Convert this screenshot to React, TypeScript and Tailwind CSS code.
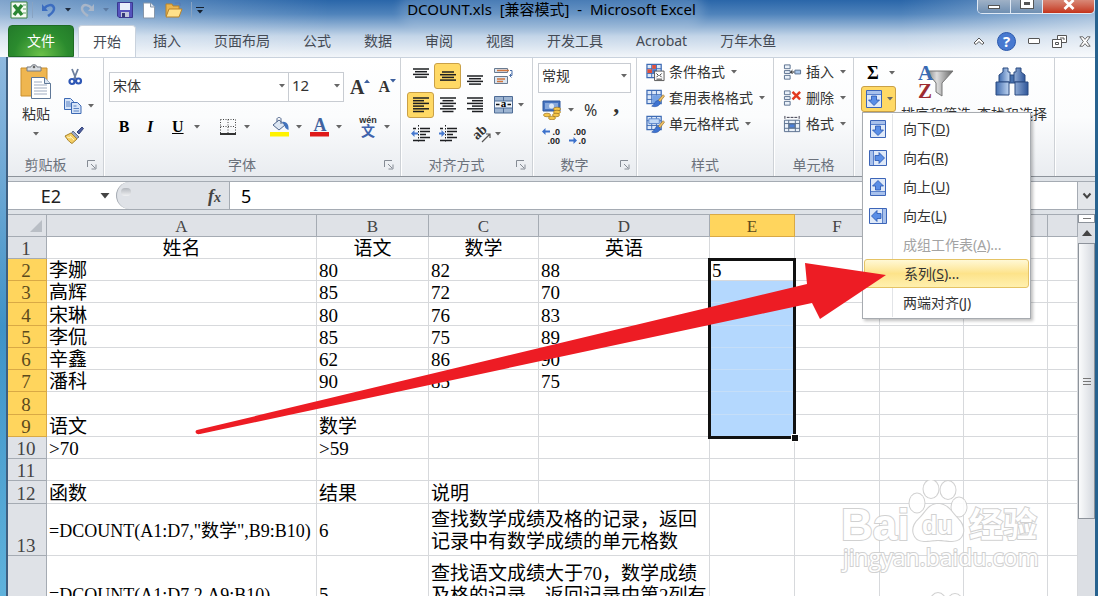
import type { ReactNode } from "react";

const tabs = ["插入", "页面布局", "公式", "数据", "审阅", "视图", "开发工具", "Acrobat", "万年木鱼"];
const columns = ["A", "B", "C", "D", "E", "F", "G", "H", ""];

type Row = { n: number; tall?: boolean; cells: string[]; center?: boolean };

const rows: Row[] = [
  { n: 1, cells: ["姓名", "语文", "数学", "英语"], center: true },
  { n: 2, cells: ["李娜", "80", "82", "88", "5"] },
  { n: 3, cells: ["高辉", "85", "72", "70"] },
  { n: 4, cells: ["宋琳", "80", "76", "83"], tall: true },
  { n: 5, cells: ["李侃", "85", "75", "89"] },
  { n: 6, cells: ["辛鑫", "62", "86", "90"] },
  { n: 7, cells: ["潘科", "90", "85", "75"] },
  { n: 8, cells: [], tall: true },
  { n: 9, cells: ["语文", "数学"] },
  { n: 10, cells: [">70", ">59"] },
  { n: 11, cells: [] },
  { n: 12, cells: ["函数", "结果", "说明"], tall: true },
];

const menuItems = [
  { text: "向下", hotkey: "D", dir: "down" },
  { text: "向右", hotkey: "R", dir: "right" },
  { text: "向上", hotkey: "U", dir: "up" },
  { text: "向左", hotkey: "L", dir: "left" },
  { text: "成组工作表", hotkey: "A", dots: true, disabled: true },
  { text: "系列", hotkey: "S", dots: true, active: true },
  { text: "两端对齐", hotkey: "J" },
];

function Caret({ className = "text-[#666]" }: { className?: string }) {
  return (
    <svg viewBox="0 0 6 4" className={`h-1 w-1.5 shrink-0 ${className}`} fill="currentColor">
      <path d="M0 0h6L3 3.6z" />
    </svg>
  );
}

function Divider() {
  return <span className="h-6 w-px shrink-0 bg-[#d5d8dc]" />;
}

function Group({ label, width, launcher, children }: { label: string; width: string; launcher?: boolean; children: ReactNode }) {
  return (
    <section className={`flex shrink-0 flex-col border-r border-[#cdd1d6] shadow-[1px_0_0_#fff] ${width}`}>
      <div className="h-[95px] pt-1">{children}</div>
      <div className="flex h-[23px] items-center px-1 text-[#6b717b]">
        <span className="flex-1 text-center">{label}</span>
        {launcher && (
          <button aria-label={`${label}设置`} className="mr-0.5 ml-2">
            <svg viewBox="0 0 10 10" className="h-2.5 w-2.5" fill="none" stroke="#858b94">
              <path d="M.5 7V.5H8M4 4l4 4M9 4.5V9H4.5" />
            </svg>
          </button>
        )}
      </div>
    </section>
  );
}

function Lines({ widths, align, y = 2 }: { widths: number[]; align: "start" | "center" | "end"; y?: number }) {
  return (
    <svg viewBox="0 0 18 18" className="h-[18px] w-[18px]" stroke="#1d1f22" strokeWidth="1.500">
      {widths.map((w, i) => {
        const x = align === "start" ? 1 : align === "center" ? 9 - w / 2 : 17 - w;
        return <path key={i} d={`M${x} ${y + i * 2.7}h${w}`} />;
      })}
    </svg>
  );
}

function AlignButton({ label, on, children }: { label: string; on?: boolean; children: ReactNode }) {
  return (
    <button
      aria-label={label}
      className={`flex h-[26px] w-[27px] items-center justify-center rounded-[3px] ${on ? "border border-[#c9a047] bg-[#ffd965]" : ""}`}
    >
      {children}
    </button>
  );
}

const turns: Record<string, string> = { down: "rotate(0 9 9)", left: "rotate(90 9 9)", up: "rotate(180 9 9)", right: "rotate(270 9 9)" };

function FillIcon({ dir }: { dir: string }) {
  return (
    <svg viewBox="0 0 18 18" className="h-[18px] w-[18px]">
      <g transform={turns[dir]}>
        <path d="M1.500.500h15v17h-15z" fill="#dfe9f8" stroke="#3c65b8" />
        <path d="M2 1h14v3H2z" fill="#a8c1ec" />
        <path d="M2 4.500h14" stroke="#5b82cc" />
        <path d="M6.500 6h5v4h3L9 15.500 3.500 10h3z" fill="#5a8ee6" stroke="#2554b0" strokeWidth=".8" />
      </g>
    </svg>
  );
}

function PasteIcon() {
  return (
    <svg viewBox="0 0 32 36" className="h-9 w-8">
      <path d="M1 4h26v28H1z" fill="#efb650" stroke="#c98f2e" />
      <path d="M7 7V3h4c0-3 6-3 6 0h4v4z" fill="#d9dde2" stroke="#747a83" />
      <circle cx="14" cy="3" r="1.300" fill="#666" />
      <path d="M11.500 13.500h13l6 6v15h-19z" fill="#fff" stroke="#5f7898" />
      <path d="M24.500 13.500v6h6" fill="#dce5f0" stroke="#5f7898" />
      <path d="M14 18h8M14 21h13M14 24h13M14 27h13M14 30h13" stroke="#9fabc0" />
    </svg>
  );
}

function CutIcon() {
  return (
    <svg viewBox="0 0 18 18" className="h-[18px] w-[18px]" fill="none">
      <path d="M6 1l4 10M12 1L8 11" stroke="#6d7f9d" strokeWidth="1.800" />
      <circle cx="6" cy="13.500" r="2.500" stroke="#2e57b5" strokeWidth="2.200" />
      <circle cx="12.500" cy="13" r="2.500" stroke="#2e57b5" strokeWidth="2.200" />
    </svg>
  );
}

function CopyIcon() {
  return (
    <svg viewBox="0 0 18 18" className="h-[18px] w-[18px]" fill="#d6e4f8" stroke="#3c69b4">
      <path d="M.5 1.500h6l3 3v8h-9z" />
      <path d="M7.500 5.500h6l3.500 3.500v7.500H7.500z" />
      <path d="M2 5h4M2 7h5M2 9h5M9.500 9h3M9.500 11.500h5.500M9.500 14h5.500" strokeWidth=".8" />
    </svg>
  );
}

function BrushIcon() {
  return (
    <svg viewBox="0 0 20 18" className="h-[18px] w-5">
      <path d="M13 6l5-5 1.500 1.500L15 8z" fill="#4c5e9e" stroke="#37467c" />
      <path d="M9 5l6 6-3 2-5-5z" fill="#9da9c4" stroke="#5d6a8c" />
      <path d="M7 7l6 6-5 4.500C5 16 3 13 1 10z" fill="#f5cf66" stroke="#a8832c" />
      <path d="M3 11l4 1M6 10l4 4" stroke="#fff3bf" />
    </svg>
  );
}

function BorderIcon() {
  return (
    <svg viewBox="0 0 16 16" className="h-4 w-4" stroke="#444" fill="none">
      <path d="M.5.500h15M.5 7.500h15M.5.500v14M8 .500v14M15.500.500v14" strokeDasharray="1 1.500" />
      <path d="M0 15h16" stroke="#000" strokeWidth="1.600" />
    </svg>
  );
}

function BucketIcon() {
  return (
    <svg viewBox="0 0 20 20" className="h-5 w-5">
      <path d="M3 8l6-5 6 5-6 5z" fill="#dce6f3" stroke="#51678d" />
      <path d="M7 5V2c0-2 4-2 4 0v5" fill="none" stroke="#51678d" />
      <path d="M12 5c5-1 7 3 6.500 8-2-1-4-2-4-5z" fill="#4273bd" />
      <path d="M0 15h19v4.500H0z" fill="#fff200" />
    </svg>
  );
}

function FontColorIcon() {
  return (
    <svg viewBox="0 0 20 20" className="h-5 w-5 overflow-visible">
      <text x="10" y="14" textAnchor="middle" fontSize="18" fontWeight="700" fontFamily="Liberation Serif, serif" fill="#41639f">A</text>
      <path d="M0 15h19v4.500H0z" fill="#df1a1a" />
    </svg>
  );
}

function PhoneticIcon() {
  return (
    <svg viewBox="0 0 20 20" className="h-5 w-5 overflow-visible">
      <text x="10" y="6" textAnchor="middle" fontSize="9" fontWeight="700" fontFamily="Liberation Sans, sans-serif" fill="#333">wén</text>
      <text x="10" y="19" textAnchor="middle" fontSize="14" fontWeight="700" fontFamily="Noto Sans CJK SC, sans-serif" fill="#3f63ac">文</text>
    </svg>
  );
}

function IndentIcon({ right }: { right?: boolean }) {
  return (
    <svg viewBox="0 0 20 18" className="h-[18px] w-5" stroke="#1d1f22" strokeWidth="1.700">
      <path d="M9 3.500h10M9 6.500h10M9 9.500h6M9 12.500h10M2 15.500h12M2 3.500h3" />
      <path d="M7.500 0v18" strokeDasharray="1.500 1.500" strokeWidth="1" />
      <path d={right ? "M7 8.500L3.500 5v2.500H1v2h2.500V12z" : "M0 8.500L3.500 5v2.500H7v2H3.500V12z"} fill="#4679cf" stroke="none" />
    </svg>
  );
}

function WrapIcon() {
  return (
    <svg viewBox="0 0 20 18" className="h-[18px] w-5" fill="#dbe5f0" stroke="#697b91">
      <path d="M.5 1.500h13v4H.5zM.5 9.500h13v7H.5z" />
      <path d="M3 3.500h12M3 12h8M3 14.500h6" stroke="#d0763e" strokeWidth="1.300" />
      <path d="M16 3.500h2v5h-2m1.500-2l-2 2 2 2" fill="none" stroke="#4b6fa8" />
    </svg>
  );
}

function MergeIcon() {
  return (
    <svg viewBox="0 0 20 18" className="h-[18px] w-5">
      <path d="M.5.500h18v16.500H.5z" fill="#9eb5d2" stroke="#4f6c96" />
      <path d="M1 5h17v7H1z" fill="#f2f6fb" />
      <path d="M9.500 1v4M9.500 12v5M.5 5h18M.5 12h18" stroke="#4f6c96" />
      <text x="9.500" y="11" textAnchor="middle" fontSize="11" fontWeight="700" fontFamily="Liberation Serif, serif">a</text>
      <path d="M2 8.500h3.500M13.500 8.500H17" stroke="#111" strokeWidth="1.500" />
    </svg>
  );
}

function OrientationIcon() {
  return (
    <svg viewBox="0 0 20 18" className="h-[18px] w-5 overflow-visible">
      <text x="1" y="12" fontSize="14" fontWeight="700" fontFamily="Liberation Serif, serif" transform="rotate(-42 7 10)" fill="#333">ab</text>
      <path d="M9 17l8-8m0 4V9h-4" fill="none" stroke="#555" strokeWidth="1.200" />
    </svg>
  );
}

function CurrencyIcon() {
  return (
    <svg viewBox="0 0 20 20" className="h-5 w-5">
      <path d="M1 1h17v10H1z" fill="#4774c0" stroke="#2e569c" />
      <path d="M3 3h13v6H3z" fill="#87a8dc" />
      <circle cx="9.500" cy="6" r="2.500" fill="#dce8f8" />
      <g fill="#f6c64a" stroke="#9c7420" strokeWidth=".7">
        <ellipse cx="15" cy="9" rx="3.500" ry="1.800" />
        <ellipse cx="15" cy="12" rx="3.500" ry="1.800" />
        <ellipse cx="14" cy="15" rx="3.500" ry="1.800" />
        <ellipse cx="5" cy="15" rx="3.500" ry="1.800" />
        <ellipse cx="10" cy="18" rx="3.500" ry="1.800" />
      </g>
    </svg>
  );
}

function DecimalIcon({ less }: { less?: boolean }) {
  return (
    <svg viewBox="0 0 20 18" className="h-[18px] w-5 overflow-visible" fontSize="9" fontWeight="700" fontFamily="Liberation Sans, sans-serif" fill="#222">
      <text x="18" y="8" textAnchor="end">{less ? ".00" : ".0"}</text>
      <text x="18" y="17" textAnchor="end">{less ? ".0" : ".00"}</text>
      <path d={less ? "M9 13.500L5.500 10v2.500H1v2h4.500V17z" : "M0 4.500L3.500 1v2.500H8v2H3.500V8z"} fill="#3c71cb" />
    </svg>
  );
}

function StyleIcon({ kind }: { kind: number }) {
  return (
    <svg viewBox="0 0 20 20" className="h-[19px] w-[19px]">
      <path d="M1 1.500h15v14H1z" fill="#dce8f8" stroke="#3f6cb5" strokeWidth="1.300" />
      <path d="M1 6h15M1 11h15M6 1.500v14M11 1.500v14" stroke="#3f6cb5" />
      {kind === 0 && (
        <>
          <path d="M6.500 2h4v4h-4zM1.500 6.500h5v4h-5z" fill="#e1503c" />
          <path d="M6.500 6.500h4v4h-4z" fill="#4673c6" />
          <path d="M9 8.500h10v10H9z" fill="#fff" stroke="#555" />
          <path d="M11 11l2 2-2 2M16.500 11l-2 2 2 2M11 17h6" fill="none" stroke="#333" />
        </>
      )}
      {kind === 1 && <path d="M6.500 6.500h9v8.500h-9z" fill="#75a2e4" />}
      {kind === 2 && <path d="M3 4h11v5H3z" fill="#c0d8f6" stroke="#5d88ce" />}
      {kind > 0 && (
        <>
          <path d="M12 13l6-7 1.500 1.500-5.500 7z" fill="#f0c267" stroke="#956f2a" strokeWidth=".7" />
          <path d="M13 12c-4 0-3 4-7 6 4 1.500 9 0 9-4z" fill="#3d73d1" stroke="#2855a7" strokeWidth=".7" />
        </>
      )}
    </svg>
  );
}

function CellIcon({ kind }: { kind: number }) {
  return (
    <svg viewBox="0 0 20 20" className="h-[19px] w-[19px]" fill="#eaf1f9" stroke="#596f8d">
      {kind < 2 && <path d="M1.500 2h6v4h-6zM1.500 13h6v4h-6zM1.500 8h6v3h-6z" />}
      {kind === 0 && (
        <>
          <path d="M12.500 7.500h6v4h-6z" fill="#a9c6ea" />
          <path d="M12 9.500H8m2-2l-2 2 2 2" fill="none" stroke="#111" />
        </>
      )}
      {kind === 1 && <path d="M10 3l8 8M18 3l-8 8" stroke="#e23a20" strokeWidth="2.600" />}
      {kind === 2 && (
        <>
          <path d="M2 1v3M17 1v3M4 2.500h11" stroke="#334" strokeDasharray="3 1" />
          <path d="M1.500 5.500h16v12h-16z" />
          <path d="M6 5.500v12M13 5.500v12M1.500 9h16M1.500 14h16" />
          <path d="M6.500 9.500h6v4h-6z" fill="#4b80da" />
        </>
      )}
    </svg>
  );
}

function SortIcon() {
  return (
    <svg viewBox="0 0 36 36" className="h-9 w-9 overflow-visible" fontWeight="700" fontFamily="Liberation Serif, serif" fontSize="21">
      <defs>
        <linearGradient id="funnel">
          <stop stopColor="#777" />
          <stop offset=".4" stopColor="#ddd" />
          <stop offset="1" stopColor="#666" />
        </linearGradient>
      </defs>
      <path d="M8 7h27L24 19v13l-6-4v-9z" fill="url(#funnel)" stroke="#777" />
      <text x="0" y="16" fill="#3969b3">A</text>
      <text x="0" y="34" fill="#9d2b30">Z</text>
    </svg>
  );
}

function FindIcon() {
  return (
    <svg viewBox="0 0 36 34" className="h-9 w-9" stroke="#2b4a80">
      <defs>
        <linearGradient id="lens">
          <stop stopColor="#3f6bae" />
          <stop offset=".4" stopColor="#bdd3f0" />
          <stop offset="1" stopColor="#2f569a" />
        </linearGradient>
      </defs>
      <path d="M14 10h8v8h-8z" fill="#4670ad" />
      <path d="M9 3h5v4h2v10H5V10l4-3zM22 3h5v4l4 3v7H20V7h2z" fill="url(#lens)" />
      <path d="M2 17h13v13H2zM21 17h13v13H21z" fill="url(#lens)" />
    </svg>
  );
}

function TitleBar() {
  return (
    <header className="grid h-[25px] grid-cols-[1fr_auto_1fr] items-start">
      <div className="flex h-5 items-center pl-0.5">
        <svg viewBox="0 0 18 18" className="h-[18px] w-[18px]">
          <path d="M1 1h16v16H1z" fill="#f5faf3" stroke="#3c8342" />
          <path d="M4 4l8 10M12 4L4 14" stroke="#2b8634" strokeWidth="3.500" />
          <path d="M13 4h3M13 8h3M13 12h3" stroke="#5da163" />
        </svg>
        <span className="mr-1.5 ml-1 h-4 w-px bg-[#88a3c2]" />
        <button aria-label="撤消" className="ml-0.5 flex items-center gap-2">
          <svg viewBox="0 0 16 16" className="h-4 w-4" fill="none" stroke="#3c6dc0" strokeWidth="2.500">
            <path d="M3 7c3-5 9-5 10-1 .5 4-3 6-6 8" />
            <path d="M1 2v7h6z" fill="#3c6dc0" stroke="none" />
          </svg>
          <Caret className="text-[#1e2b3e]" />
        </button>
        <button aria-label="恢复" className="ml-2 flex items-center gap-2">
          <svg viewBox="0 0 16 16" className="h-4 w-4" fill="none" stroke="#a9b6c8" strokeWidth="2.500">
            <path d="M13 7C10 2 4 2 3 6c-.5 4 3 6 6 8" />
            <path d="M15 2v7H9z" fill="#a9b6c8" stroke="none" />
          </svg>
          <Caret className="text-[#5c7ba3]" />
        </button>
        <button aria-label="保存" className="ml-2">
          <svg viewBox="0 0 16 16" className="h-4 w-4">
            <path d="M.5.500h15v15H2L.5 14z" fill="#5553bd" stroke="#3a388e" />
            <path d="M3 1h10v7H3z" fill="#e9f0fa" />
            <path d="M4 10h8v5H4z" fill="#c1c7dc" />
            <path d="M5 11h3v4H5z" fill="#333878" />
          </svg>
        </button>
        <button aria-label="新建" className="ml-2">
          <svg viewBox="0 0 16 16" className="h-[17px] w-4" fill="#fff" stroke="#8797aa">
            <path d="M2.500.500h7l4 4v11h-11z" />
            <path d="M9.500.500v4h4" fill="#dce4ef" />
          </svg>
        </button>
        <button aria-label="打开" className="ml-2">
          <svg viewBox="0 0 18 16" className="h-4 w-[18px]" stroke="#b9832a">
            <path d="M1 2h6l1 2h6v10H1z" fill="#eab650" />
            <path d="M4 7h13l-3 8H1z" fill="#ffe08a" />
            <path d="M10 1h5v3" fill="none" stroke="#5978b1" />
          </svg>
        </button>
        <span className="mr-1 ml-2 h-4 w-px bg-[#88a3c2]" />
        <button aria-label="自定义快速访问工具栏" className="flex flex-col items-center gap-0.5">
          <span className="h-px w-2 bg-[#15202f]" />
          <Caret className="text-[#15202f]" />
        </button>
      </div>
      <h1 className="rounded-full bg-white/15 text-[15px] leading-[18px] whitespace-pre text-black shadow-[0_0_10px_8px_rgba(255,255,255,0.15)]">
        DCOUNT.xls  [兼容模式]  -  Microsoft Excel
      </h1>
      <div className="flex h-3.5 w-[118px] justify-self-end overflow-hidden rounded-b-[5px] border border-t-0 border-[#dfe9f5] text-white">
        <button aria-label="最小化" className="flex w-[33px] items-center justify-center border-r border-[#dfe9f5] bg-linear-to-b from-[#9fb1c6] to-[#6f8fb2]">
          <span className="h-1 w-3 border border-[#555] bg-white" />
        </button>
        <button aria-label="还原" className="flex w-8 items-start justify-center border-r border-[#dfe9f5] bg-linear-to-b from-[#9fb1c6] to-[#6f8fb2]">
          <span className="h-2 w-3 border-3 border-t-2 border-white bg-[#555] outline outline-[#555]" />
        </button>
        <button aria-label="关闭" className="flex flex-1 items-start justify-center bg-linear-to-b from-[#d88877] to-[#c33118]">
          <svg viewBox="0 0 12 10" className="h-2.5 w-3" fill="none" stroke="#fff" strokeWidth="2.800">
            <path d="M1.500 0l9 9M10.500 0l-9 9" />
          </svg>
        </button>
      </div>
    </header>
  );
}

function TabBar() {
  return (
    <nav className="flex h-8 text-[#444a54]">
      <button className="w-[66px] rounded-t-[4px] border border-[#1e6b23] bg-[radial-gradient(ellipse_at_bottom,#6cc24a,#2b8b2e_60%,#237a2a)] text-white">文件</button>
      <div className="flex flex-1 items-center gap-px">
        <button className="ml-1 h-full w-[58px] rounded-t-[4px] border border-b-0 border-[#c9d2dd] bg-white">开始</button>
        {tabs.map((t) => (
          <button key={t} className="px-4">{t}</button>
        ))}
      </div>
      <div className="flex items-center gap-3 pr-1">
        <button aria-label="功能区最小化">
          <svg viewBox="0 0 12 10" className="h-2.5 w-3" fill="#fff" stroke="#555">
            <path d="M1 7l5-5 5 5-2 1.500-3-3-3 3z" />
          </svg>
        </button>
        <button aria-label="帮助" className="h-[19px] w-[19px] rounded-full border border-[#2a58ac] bg-[#4779d0] text-[15px] leading-4 font-bold text-white">?</button>
        <button aria-label="最小化工作簿" className="h-1.5 w-3 rounded-[1px] border border-[#555] bg-white" />
        <button aria-label="还原工作簿">
          <svg viewBox="0 0 15 13" className="h-[13px] w-[15px]" fill="#fff" stroke="#555">
            <path d="M5.500.500h9v7h-9z" />
            <path d="M8 3h4v2" fill="none" />
            <path d="M.5 4.500h9v8h-9z" />
            <path d="M3.500 7.500h3v2h-3z" />
          </svg>
        </button>
        <button aria-label="关闭工作簿">
          <svg viewBox="0 0 14 12" className="h-[11px] w-3" fill="#fff" stroke="#555">
            <path d="M1 .500h3.500L7 3.500 9.500.500H13L9 6l4 5.500H9.500L7 8.500l-2.500 3H1L5 6z" />
          </svg>
        </button>
      </div>
    </nav>
  );
}

function FillMenu() {
  return (
    <div role="menu" className="absolute top-full left-px z-10 w-[169px] border border-[#a7abb0] bg-white p-px shadow-[2px_2px_3px_rgba(0,0,0,0.25)]">
      {menuItems.map((m) => (
        <button
          key={m.hotkey}
          role="menuitem"
          disabled={m.disabled}
          className={`flex h-[29px] w-full items-center text-left ${
            m.active
              ? "rounded-[3px] border border-[#e5c365] bg-linear-to-b from-[#fff8d5] via-[#fde38a] to-[#fff0ae]"
              : m.disabled
                ? "text-[#a3a3a3]"
                : "text-[#333]"
          }`}
        >
          <span className={`flex h-full w-[29px] items-center justify-center ${m.active ? "" : "border-r border-[#e2e4e7]"}`}>
            {m.dir && <FillIcon dir={m.dir} />}
          </span>
          <span className="pl-2.5">
            {m.text}(<u>{m.hotkey}</u>){m.dots && "..."}
          </span>
        </button>
      ))}
    </div>
  );
}

function Ribbon() {
  return (
    <div className="flex h-[120px] border-t border-b border-t-[#c9d2dd] border-b-[#8d939b] bg-linear-to-b from-white via-[#fbfcfd] to-[#e9ecf0] text-[#333]">
      <Group label="剪贴板" width="w-[96px]" launcher>
        <div className="flex gap-3 pt-0.5 pl-3">
          <button className="flex w-8 flex-col items-center">
            <PasteIcon />
            <span className="mt-1 leading-5 whitespace-nowrap">粘贴</span>
            <Caret className="mt-2 text-[#666]" />
          </button>
          <div className="flex flex-col gap-[11px] pt-1">
            <button aria-label="剪切" className="pl-0.5"><CutIcon /></button>
            <button aria-label="复制" className="flex items-center gap-1.5"><CopyIcon /><Caret /></button>
            <button aria-label="格式刷"><BrushIcon /></button>
          </div>
        </div>
      </Group>

      <Group label="字体" width="w-[297px]" launcher>
        <div className="flex pt-2.5 pl-[5px]">
          <button aria-label="字体" className="flex h-[30px] w-[180px] items-center justify-between border border-[#c8ccd2] bg-white px-[3px] pb-0.5">
            宋体<Caret />
          </button>
          <button aria-label="字号" className="flex h-[30px] w-[55px] items-center justify-between border border-l-0 border-[#c8ccd2] bg-white px-[3px] pb-0.5 text-[15px]">
            12<Caret />
          </button>
          <button aria-label="增大字号" className="ml-1.5 flex items-center font-['Liberation_Serif',serif] text-xl font-bold">
            A<Caret className="mb-3 rotate-180 text-[#3c5f9e]" />
          </button>
          <button aria-label="减小字号" className="ml-2 flex items-center font-['Liberation_Serif',serif] text-base font-bold">
            A<Caret className="mb-3 text-[#3c5f9e]" />
          </button>
        </div>
        <div className="mt-[11px] flex h-7 items-center pl-3 font-['Liberation_Serif',serif] text-base">
          <button aria-label="加粗" className="w-4 font-bold text-black">B</button>
          <button aria-label="倾斜" className="ml-3 w-3 font-bold text-black italic">I</button>
          <button aria-label="下划线" className="ml-4 flex items-center gap-2.5 font-bold text-black"><u>U</u><Caret /></button>
          <span className="ml-2.5"><Divider /></span>
          <button aria-label="边框" className="ml-2.5 flex items-center gap-2"><BorderIcon /><Caret /></button>
          <span className="mx-2.5"><Divider /></span>
          <button aria-label="填充颜色" className="flex items-center gap-1.5"><BucketIcon /><Caret /></button>
          <button aria-label="字体颜色" className="ml-2 flex items-center gap-1.5"><FontColorIcon /><Caret /></button>
          <span className="mx-2"><Divider /></span>
          <button aria-label="拼音指南" className="flex items-center gap-1.5"><PhoneticIcon /><Caret /></button>
        </div>
      </Group>

      <Group label="对齐方式" width="w-[132px]" launcher>
        <div className="flex flex-col gap-[3px] pt-px pl-1.5">
          <div className="flex items-center">
            <AlignButton label="顶端对齐"><Lines widths={[16, 12, 16, 12]} align="center" /></AlignButton>
            <AlignButton label="垂直居中" on><Lines widths={[12, 16, 12, 16]} align="center" y={5} /></AlignButton>
            <AlignButton label="底端对齐"><Lines widths={[16, 12, 16, 12]} align="center" y={9} /></AlignButton>
            <button aria-label="自动换行" className="ml-1.5"><WrapIcon /></button>
          </div>
          <div className="flex items-center">
            <AlignButton label="文本左对齐" on><Lines widths={[16, 11, 16, 11, 16, 11]} align="start" /></AlignButton>
            <AlignButton label="居中"><Lines widths={[16, 11, 16, 11, 16, 11]} align="center" /></AlignButton>
            <AlignButton label="文本右对齐"><Lines widths={[16, 11, 16, 11, 16, 11]} align="end" /></AlignButton>
            <button aria-label="合并后居中" className="ml-1.5 flex items-center gap-1"><MergeIcon /><Caret /></button>
          </div>
          <div className="flex items-center">
            <AlignButton label="减少缩进量"><IndentIcon /></AlignButton>
            <AlignButton label="增加缩进量"><IndentIcon right /></AlignButton>
            <span className="mx-1"><Divider /></span>
            <button aria-label="方向" className="ml-1 flex items-center gap-0.5"><OrientationIcon /><Caret /></button>
          </div>
        </div>
      </Group>

      <Group label="数字" width="w-[104px]" launcher>
        <div className="px-[5px] pt-px">
          <button aria-label="数字格式" className="flex h-[30px] w-full items-center justify-between border border-[#c8ccd2] bg-white px-[3px] pb-1">
            常规<Caret />
          </button>
          <div className="mt-1 flex h-[26px] items-center pl-1">
            <button aria-label="会计数字格式" className="flex items-center gap-1.5"><CurrencyIcon /><Caret /></button>
            <button aria-label="百分比样式" className="ml-2.5 text-base">%</button>
            <button aria-label="千位分隔样式" className="ml-4 pb-3 font-['Liberation_Serif',serif] text-2xl leading-4 font-bold">,</button>
          </div>
          <div className="mt-1 flex gap-1.5 pl-1">
            <button aria-label="增加小数位数"><DecimalIcon /></button>
            <button aria-label="减少小数位数"><DecimalIcon less /></button>
          </div>
        </div>
      </Group>

      <Group label="样式" width="w-[137px]">
        <div className="-mt-[3px]">
          {["条件格式", "套用表格格式", "单元格样式"].map((t, i) => (
            <button key={t} className="flex h-[26px] items-center gap-1 pl-[9px] leading-5">
              <StyleIcon kind={i} />{t}<Caret className="ml-0.5 text-[#666]" />
            </button>
          ))}
        </div>
      </Group>

      <Group label="单元格" width="w-[80px]">
        <div className="-mt-[3px]">
          {["插入", "删除", "格式"].map((t, i) => (
            <button key={t} className="flex h-[26px] items-center gap-1 pl-[9px] leading-5">
              <CellIcon kind={i} />{t}<Caret className="ml-0.5 text-[#666]" />
            </button>
          ))}
        </div>
      </Group>

      <Group label="" width="w-[201px]">
        <div className="flex pl-[7px]">
          <div className="w-9">
            <button aria-label="求和" className="flex h-6 items-center gap-2.5 pb-0.5 pl-1.5 font-['Liberation_Serif',serif] text-lg font-bold text-black">
              Σ<Caret />
            </button>
            <div className="relative">
              <button aria-label="填充" className="flex h-[26px] w-[35px] items-center justify-center gap-1 rounded-[3px] border border-[#c9a047] bg-[#ffd965]">
                <FillIcon dir="down" /><Caret />
              </button>
              <FillMenu />
            </div>
          </div>
          <button className="ml-[3px] flex w-[72px] flex-col items-center pt-0.5">
            <SortIcon />
            <span className="mt-1 leading-5 whitespace-nowrap">排序和筛选</span>
          </button>
          <button className="ml-1 flex w-[72px] flex-col items-center pt-0.5">
            <FindIcon />
            <span className="mt-1 leading-5 whitespace-nowrap">查找和选择</span>
          </button>
        </div>
      </Group>
    </div>
  );
}

function FormulaBar() {
  return (
    <div className="my-1 flex h-[29px] border-y border-[#a5abb3] bg-white">
      <input aria-label="名称框" defaultValue="E2" className="w-[86px] text-center text-lg text-[#222]" />
      <button aria-label="名称列表" className="w-[22px] pl-1.5"><Caret className="h-1.5! w-2.5! text-[#444]" /></button>
      <div className="flex w-[114px] items-center justify-between rounded-l-full border-r border-l border-[#a5abb3] bg-[#dfe2e7] pr-2 pl-1">
        <span className="mb-2 h-2 w-2.5 rounded-full bg-linear-to-b from-[#b4b8be] to-[#f0f1f3]" />
        <button aria-label="插入函数" className="font-['Liberation_Serif',serif] text-lg font-bold text-[#444] italic">
          f<span className="text-sm">x</span>
        </button>
      </div>
      <input aria-label="编辑栏" defaultValue="5" className="min-w-0 flex-1 pl-[11px] text-lg text-black" />
      <button aria-label="展开编辑栏" className="flex w-[18px] items-center justify-center border-l border-[#a5abb3] bg-[#e3e6ea]">
        <svg viewBox="0 0 10 8" className="h-2 w-2.5" fill="none" stroke="#444" strokeWidth="2">
          <path d="M1.500 1.500L5 5.500l3.500-4" />
        </svg>
      </button>
    </div>
  );
}

function RowHead({ n, on }: { n: number; on?: boolean }) {
  return (
    <th className={`border-r border-b pt-[3px] pr-0.5 pb-0 align-bottom leading-[18px] font-normal ${on ? "border-[#d9a945] bg-[#ffd55d] text-[#5b4a1c]" : "border-[#a5abb3] bg-[#dfe2e7] text-[#444]"}`}>
      {n}
    </th>
  );
}

function Sheet() {
  const cell = "border-r border-b border-[#d7d9dc] px-0.5 pt-[3px] pb-0 whitespace-nowrap";
  return (
    <table className="w-full table-fixed border-separate border-spacing-0 bg-white font-['Liberation_Serif','Noto_Sans_CJK_SC',serif] text-[19px] leading-[18px] text-black">
      <colgroup>
        <col className="w-[39px]" />
        <col className="w-[270px]" />
        <col className="w-[112px]" />
        <col className="w-[110px]" />
        <col className="w-[171px]" />
        <col className="w-[85px]" />
        <col className="w-[85px]" />
        <col className="w-[84px]" />
        <col className="w-[84px]" />
        <col />
      </colgroup>
      <thead>
        <tr className="h-[23px] text-[17px]">
          <th aria-label="全选" className="border-t border-r border-b border-[#a5abb3] bg-[#dfe2e7]">
            <svg viewBox="0 0 12 12" className="ml-auto mr-1 h-3 w-3" fill="#b9bec5">
              <path d="M12 0v12H0z" />
            </svg>
          </th>
          {columns.map((c) => (
            <th
              key={c}
              className={`border-t border-r border-b p-0 pt-0.5 font-normal ${c === "E" ? "border-[#d9a945] bg-[#ffd55d] text-[#5b4a1c]" : "border-[#a5abb3] bg-[#dfe2e7] text-[#444]"}`}
            >
              {c}
            </th>
          ))}
        </tr>
      </thead>
      <tbody>
        {rows.map((r) => {
          const selected = r.n >= 2 && r.n <= 9;
          return (
            <tr key={r.n} className={r.tall ? "h-[23px]" : "h-[22px]"}>
              <RowHead n={r.n} on={selected} />
              {columns.map((c, i) => (
                <td key={c} className={`${cell} ${r.center ? "text-center" : ""} ${c === "E" && r.n > 2 && selected ? "border-[#c5def8]! bg-[#b4d8fe]" : ""} ${c === "E" && r.n === 2 ? "relative" : ""}`}>
                  {r.cells[i]}
                  {c === "E" && r.n === 2 && (
                    <div className="absolute -top-px -left-0.5 h-[181px] w-[88px] border-3 border-[#111]">
                      <span className="absolute -right-1.5 -bottom-1.5 h-2 w-2 border border-white bg-[#111]" />
                    </div>
                  )}
                </td>
              ))}
            </tr>
          );
        })}
        <tr className="h-[52px]">
          <RowHead n={13} />
          <td className={`${cell} text-lg leading-[22px]`}>=DCOUNT(A1:D7,"数学",B9:B10)</td>
          <td className={cell}>6</td>
          <td colSpan={2} className={`${cell} leading-[22px]`}>查找数学成绩及格的记录，返回<br />记录中有数学成绩的单元格数</td>
          {columns.slice(4).map((c) => <td key={c} className={cell} />)}
        </tr>
        <tr className="h-[76px]">
          <RowHead n={14} />
          <td className={`${cell} text-lg leading-[22px]`}>=DCOUNT(A1:D7,2,A9:B10)</td>
          <td className={cell}>5</td>
          <td colSpan={2} className={`${cell} pt-[7px]! align-top leading-[22px]`}>查找语文成绩大于70，数学成绩<br />及格的记录，返回记录中第2列有</td>
          {columns.slice(4).map((c) => <td key={c} className={cell} />)}
        </tr>
      </tbody>
    </table>
  );
}

function ScrollBar() {
  return (
    <div className="flex w-[17px] shrink-0 flex-col bg-[#dcdfe4]">
      <div className="flex h-[9px] items-center justify-center border border-[#8d939b] bg-white"><span className="h-px w-2 bg-[#777]" /></div>
      <button aria-label="向上滚动" className="flex h-5 items-center justify-center">
        <svg viewBox="0 0 10 6" className="h-1.5 w-2.5" fill="#444"><path d="M5 0l5 6H0z" /></svg>
      </button>
      <div className="flex h-[276px] flex-col items-center justify-center gap-0.5 border border-[#8d939b] bg-linear-to-r from-[#fafbfc] to-[#d5d9df]">
        <span className="h-px w-2 bg-[#777]" />
        <span className="h-px w-2 bg-[#777]" />
        <span className="h-px w-2 bg-[#777]" />
      </div>
    </div>
  );
}

function Paw() {
  return (
    <>
      <ellipse cx="79" cy="23" rx="7.500" ry="9.500" />
      <ellipse cx="93" cy="9" rx="7.500" ry="9" />
      <ellipse cx="110" cy="10" rx="7.500" ry="9" />
      <ellipse cx="121" cy="27" rx="7.500" ry="9.500" />
      <path d="M100 24c-10 0-13 10-19 15-10 9-6 22 5 22 6 0 9-1 14-1s8 1 14 1c12 0 15-13 6-22-6-6-10-15-20-15z" />
    </>
  );
}

function Watermark() {
  return (
    <svg viewBox="0 0 206 116" className="absolute right-[54px] bottom-0 h-[116px] w-[206px] opacity-90" fill="#fff" stroke="#cdcdcd" strokeWidth="2" paintOrder="stroke">
      <text x="3" y="60" fontSize="44" fontWeight="700" fontFamily="Liberation Sans, sans-serif">Bai</text>
      <Paw />
      <text x="84" y="54" fontSize="25" fontWeight="700" fontFamily="Liberation Sans, sans-serif">du</text>
      <text x="131" y="57" fontSize="34" fontWeight="700" fontFamily="Noto Sans CJK SC, sans-serif">经验</text>
      <text x="5" y="86" fontSize="23" fontFamily="Open Sans, sans-serif">jingyan.baidu.com</text>
      <ellipse cx="100" cy="122" rx="7.500" ry="9" />
      <ellipse cx="117" cy="123" rx="7.500" ry="9" />
    </svg>
  );
}

export default function App() {
  return (
    <div className="relative flex h-screen overflow-hidden bg-[linear-gradient(90deg,#ffffff66,#ffffff00_30%,#ffffff00_82%,#ffffff77),linear-gradient(#2a66a9,#4f83bb_14px,#c3d5e8_36px,#f2f5f9_57px)] font-['Noto_Sans','Noto_Sans_CJK_SC',sans-serif] text-sm">
      <div className="mt-[57px] w-2 shrink-0 border-r-2 border-[#3f5f80] bg-linear-to-b from-[#8fb9df] via-[#3f93c7] to-[#5fb2dc]" />
      <div className="flex min-w-0 flex-1 flex-col">
        <TitleBar />
        <TabBar />
        <div className="flex min-h-0 flex-1 flex-col bg-[#dfe3e8]">
          <Ribbon />
          <FormulaBar />
          <div className="flex min-h-0 flex-1">
            <div className="min-w-0 flex-1 overflow-hidden"><Sheet /></div>
            <ScrollBar />
          </div>
        </div>
      </div>
      <div className="w-[3px] shrink-0 bg-[#27628f]" />
      <Watermark />
      <svg viewBox="0 0 700 180" className="pointer-events-none absolute top-[260px] left-[192px] z-20 h-[180px] w-[700px]" fill="#ed1c24">
        <path d="M5 170L615 24 613 3 694 15 628 59 620 43 8 174c-4 1-6-3-3-4z" />
      </svg>
    </div>
  );
}
